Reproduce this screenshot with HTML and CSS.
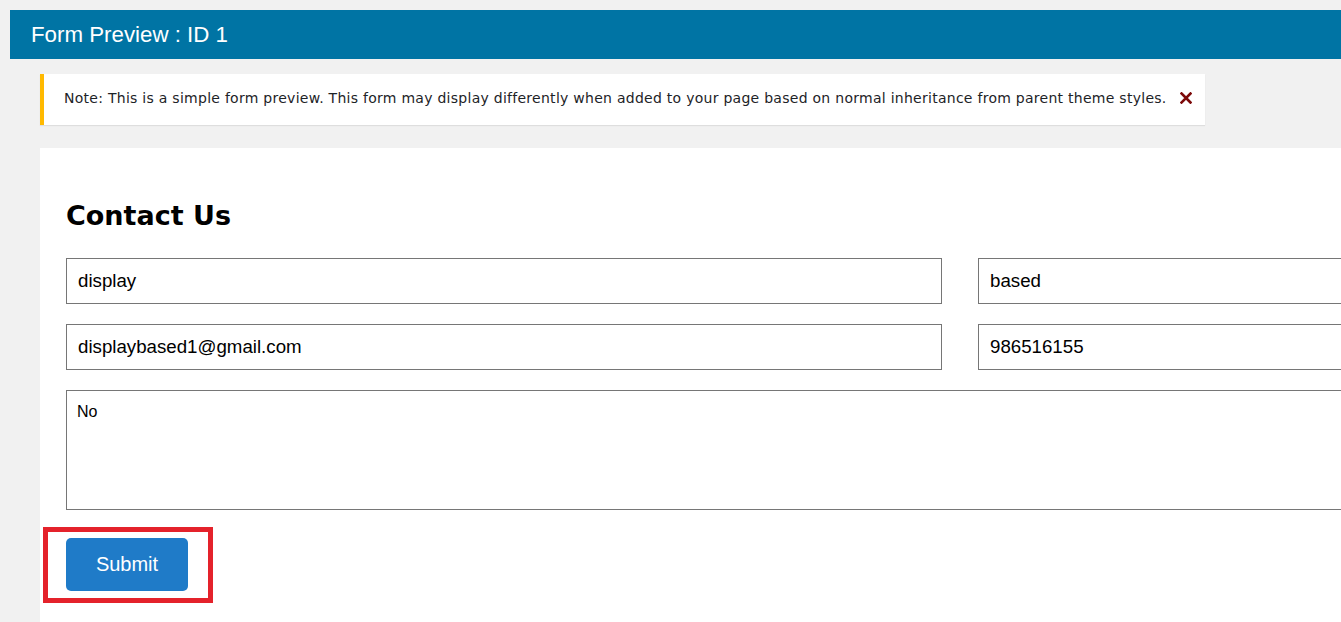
FILE: index.html
```html
<!DOCTYPE html>
<html lang="en">
<head>
  <meta charset="UTF-8">
  <title>Form Preview : ID 1</title>
  <link rel="stylesheet" href="styles.css">
</head>
<body>
  <div class="wrap">
    <h1 class="page-title">Form Preview : ID 1</h1>

    <div class="notice">
      <p>Note: This is a simple form preview. This form may display differently when added to your page based on normal inheritance from parent theme styles.</p>
      <span class="notice-close" title="Dismiss">
        <svg width="12" height="12" viewBox="0 0 12 12">
          <path d="M1.5 1.5 L10.5 10.5 M10.5 1.5 L1.5 10.5" stroke="#7d0a0a" stroke-width="2.6" stroke-linecap="square"/>
        </svg>
      </span>
    </div>

    <div class="preview">
      <h2 class="form-title">Contact Us</h2>
      <form class="contact-form">
        <div class="row">
          <input type="text" value="display">
          <input type="text" value="based">
        </div>
        <div class="row">
          <input type="email" value="displaybased1@gmail.com">
          <input type="text" value="986516155">
        </div>
        <textarea>No</textarea>
        <div class="actions">
          <button type="button" class="submit">Submit</button>
          <span class="highlight"></span>
        </div>
      </form>
    </div>
  </div>
</body>
</html>
```

FILE: styles.css
```css
html, body {
  margin: 0;
  padding: 0;
  overflow: hidden;
}

body {
  background-color: #f1f1f1;
  font-family: "DejaVu Sans", sans-serif;
  color: #111;
}

.wrap {
  margin: 10px 0 0 10px;
}

.page-title {
  margin: 0;
  height: 49px;
  padding-left: 21px;
  background-color: #0074a4;
  color: #fff;
  font-family: "Liberation Sans", Arial, sans-serif;
  font-size: 22.3px;
  font-weight: normal;
  line-height: 49px;
}

.notice {
  display: inline-flex;
  align-items: center;
  box-sizing: border-box;
  height: 51px;
  margin: 15px 0 0 30px;
  padding: 0 13px 3px 20px;
  background-color: #fff;
  border-left: 4px solid #ffb900;
  box-shadow: 0 1px 1px rgba(0, 0, 0, 0.08);
}

.notice p {
  margin: 0;
  font-size: 14px;
  letter-spacing: 0.27px;
  color: #1d2327;
}

.notice-close {
  display: flex;
  margin-left: 13px;
  cursor: pointer;
}

.preview {
  width: 1788px;
  margin: 23px 0 0 30px;
  padding: 51px 26px 40px;
  background-color: #fff;
}

.form-title {
  margin: 0 0 25px;
  font-size: 27px;
  line-height: 34px;
  font-weight: bold;
  color: #000;
}

.contact-form .row {
  display: grid;
  grid-template-columns: 876px 876px;
  gap: 36px;
  margin-bottom: 20px;
}

.contact-form input,
.contact-form textarea {
  box-sizing: border-box;
  margin: 0;
  border: 1px solid #767676;
  background: #fff;
  color: #000;
  font-family: "Liberation Sans", Arial, sans-serif;
  outline: none;
}

.contact-form input {
  height: 46px;
  padding: 0 11px;
  font-size: 18.7px;
}

.contact-form textarea {
  display: block;
  width: 1788px;
  height: 120px;
  padding: 12px 10px;
  font-size: 16px;
  resize: none;
}

.actions {
  position: relative;
  margin-top: 28px;
}

.submit {
  width: 122px;
  height: 53px;
  border: none;
  border-radius: 5px;
  background-color: #1f7bc8;
  color: #fff;
  font-family: "Liberation Sans", Arial, sans-serif;
  font-size: 20px;
  cursor: pointer;
}

/* annotation box round the button */
.highlight {
  position: absolute;
  left: -23px;
  top: -11px;
  width: 160px;
  height: 66px;
  border: 5px solid #e4222b;
  pointer-events: none;
}
```
